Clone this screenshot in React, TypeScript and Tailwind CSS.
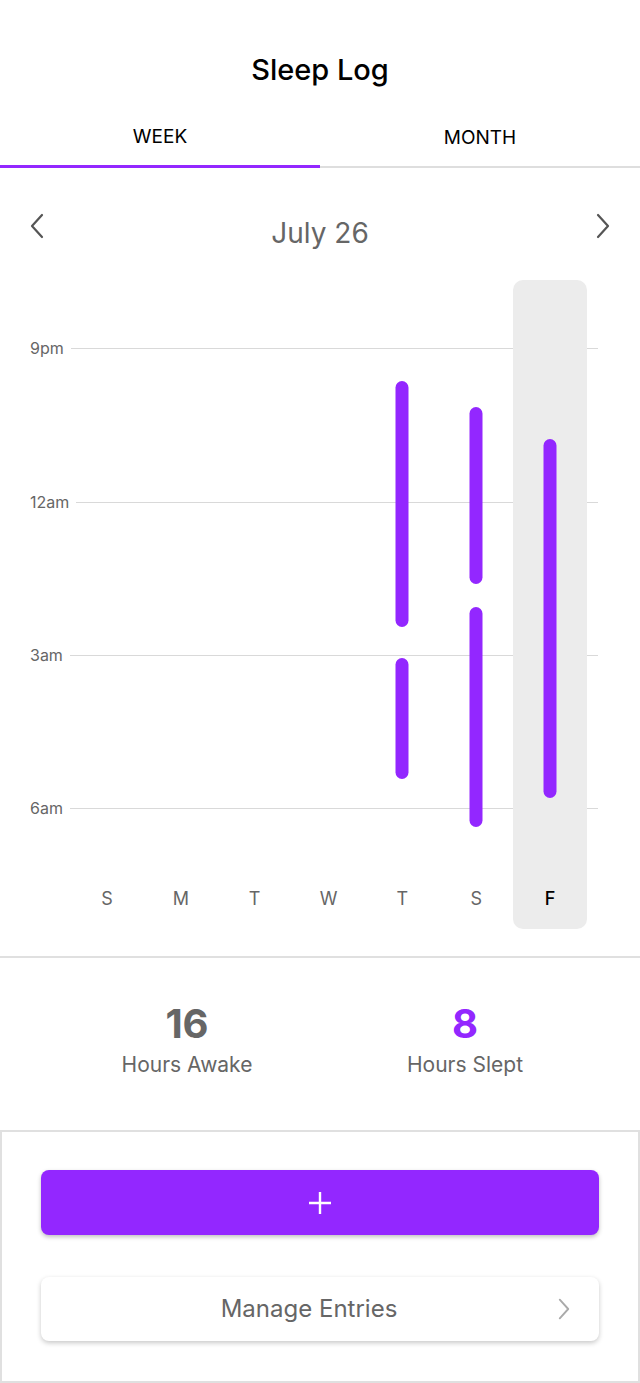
const days = ["S", "M", "T", "W", "T", "S", "F"];

// sleep segments per day, in px from chart top (9pm line sits at 68)
const sleep: { top: number; height: number }[][] = [
  [],
  [],
  [],
  [],
  [
    { top: 101, height: 246 },
    { top: 378, height: 121 },
  ],
  [
    { top: 127, height: 177 },
    { top: 327, height: 220 },
  ],
  [{ top: 159, height: 359 }],
];

const hours = [
  { label: "9pm", top: 68 },
  { label: "12am", top: 222 },
  { label: "3am", top: 375 },
  { label: "6am", top: 528 },
];

function Chevron({ dir, className }: { dir: "left" | "right"; className?: string }) {
  return (
    <svg width="16" height="26" viewBox="0 0 16 26" className={className} fill="none">
      <path
        d={dir === "left" ? "M13 2 L3 13 L13 24" : "M3 2 L13 13 L3 24"}
        stroke="currentColor"
        strokeWidth="2.2"
        strokeLinecap="round"
        strokeLinejoin="round"
      />
    </svg>
  );
}

export default function App() {
  return (
    <div className="w-[640px] h-[1383px] bg-white overflow-hidden font-['Inter',sans-serif]">
      {/* Header */}
      <div className="h-[110px] pt-[53px] text-center text-[29px] leading-[34px] font-medium text-black">
        Sleep Log
      </div>

      {/* Tabs */}
      <div className="flex border-b-2 border-[#dedede]">
        <div className="flex-1 h-[58px] -mb-[2px] border-b-[3px] border-[#9327ff] flex items-center justify-center text-[19px] text-black">
          WEEK
        </div>
        <div className="flex-1 h-[56px] flex items-center justify-center text-[19px] text-black">
          MONTH
        </div>
      </div>

      {/* Date nav */}
      <div className="relative h-[112px]">
        <div className="absolute left-[29px] top-[45px] text-[#555]">
          <Chevron dir="left" />
        </div>
        <div className="pt-[48px] text-center text-[28px] leading-[34px] text-[#666]">July 26</div>
        <div className="absolute right-[29px] top-[45px] text-[#555]">
          <Chevron dir="right" />
        </div>
      </div>

      {/* Chart */}
      <div className="relative h-[649px]">
        {hours.map((h) => (
          <div
            key={h.label}
            className="absolute left-[30px] right-[42px] flex items-center -translate-y-1/2"
            style={{ top: h.top }}
          >
            <span className="text-[16px] leading-[20px] text-[#666]">{h.label}</span>
            <div className="flex-1 h-px bg-[#d9d9d9] ml-[7px]" />
          </div>
        ))}
        <div className="absolute left-[70px] top-0 w-[517px] h-full flex">
          {days.map((d, i) => {
            const active = i === days.length - 1;
            return (
              <div
                key={i}
                className={
                  active ? "relative flex-1 h-full bg-[#ececec] rounded-[10px]" : "relative flex-1 h-full"
                }
              >
                {sleep[i].map((s, j) => (
                  <div
                    key={j}
                    className="absolute left-1/2 -translate-x-1/2 w-[13px] rounded-full bg-[#9327ff]"
                    style={{ top: s.top, height: s.height }}
                  />
                ))}
                <div
                  className={
                    active
                      ? "absolute top-[607px] left-0 right-0 text-center text-[18px] leading-[24px] font-medium text-black"
                      : "absolute top-[607px] left-0 right-0 text-center text-[18px] leading-[24px] text-[#666]"
                  }
                >
                  {d}
                </div>
              </div>
            );
          })}
        </div>
      </div>

      {/* Divider */}
      <div className="mt-[27px] h-[2px] bg-[#e0e0e0]" />

      {/* Stats */}
      <div className="h-[172px] flex pl-[48px] pr-[36px] pt-[44px]">
        <div className="flex-1 flex flex-col items-center">
          <div className="text-[40px] leading-[44px] font-bold text-[#666]">16</div>
          <div className="mt-[6px] text-[21px] leading-[26px] text-[#666]">Hours Awake</div>
        </div>
        <div className="flex-1 flex flex-col items-center">
          <div className="text-[40px] leading-[44px] font-bold text-[#9327ff]">8</div>
          <div className="mt-[6px] text-[21px] leading-[26px] text-[#666]">Hours Slept</div>
        </div>
      </div>

      {/* Actions */}
      <div className="h-[253px] border-2 border-[#e0e0e0] px-[39px] pt-[38px]">
        <button className="w-full h-[65px] rounded-[8px] bg-[#9327ff] shadow-[0_2px_4px_rgba(0,0,0,0.25)] flex items-center justify-center">
          <svg width="26" height="26" viewBox="0 0 26 26" fill="none">
            <path d="M13 2 V24 M2 13 H24" stroke="white" strokeWidth="2.4" />
          </svg>
        </button>
        <button className="relative mt-[42px] w-full h-[64px] rounded-[8px] bg-white shadow-[0_2px_5px_rgba(0,0,0,0.22)] flex items-center justify-center">
          <span className="text-[24px] text-[#666] -ml-[22px]">Manage Entries</span>
          <Chevron dir="right" className="absolute right-[28px] top-1/2 -translate-y-1/2 text-[#aaa] w-[14px] h-[22px]" />
        </button>
      </div>
    </div>
  );
}
